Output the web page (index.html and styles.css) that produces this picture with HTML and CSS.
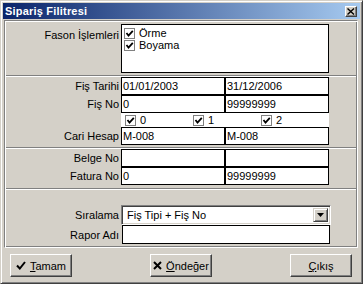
FILE: index.html
```html
<!DOCTYPE html>
<html>
<head>
<meta charset="utf-8">
<link rel="stylesheet" href="styles.css">
</head>
<body>
<div class="window">
  <div class="titlebar">
    <span class="title">Sipariş Filitresi</span>
    <span class="close"><svg width="8" height="7" viewBox="0 0 8 7"><path d="M0.5 0.5 L7 6.5 M7 0.5 L0.5 6.5" stroke="#000" stroke-width="1.4"/></svg></span>
  </div>
  <div class="panel">
    <div class="section s1">
      <div class="label top">Fason İşlemleri</div>
      <div class="listbox">
        <div class="chk"><span class="cb"><svg width="9" height="9" viewBox="0 0 9 9"><path d="M1.5 4 L3.5 6.5 L7.8 1.8" fill="none" stroke="#000" stroke-width="1.8"/></svg></span>Örme</div>
        <div class="chk"><span class="cb"><svg width="9" height="9" viewBox="0 0 9 9"><path d="M1.5 4 L3.5 6.5 L7.8 1.8" fill="none" stroke="#000" stroke-width="1.8"/></svg></span>Boyama</div>
      </div>
    </div>
    <div class="sep"></div>
    <div class="section s2">
      <div class="label">Fiş Tarihi</div>
      <div class="field">01/01/2003</div>
      <div class="field">31/12/2006</div>
      <div class="label">Fiş No</div>
      <div class="field">0</div>
      <div class="field">99999999</div>
      <div class="label"></div>
      <div class="chkrow">
        <div class="chk"><span class="cb"><svg width="9" height="9" viewBox="0 0 9 9"><path d="M1.5 4 L3.5 6.5 L7.8 1.8" fill="none" stroke="#000" stroke-width="1.8"/></svg></span>0</div>
        <div class="chk"><span class="cb"><svg width="9" height="9" viewBox="0 0 9 9"><path d="M1.5 4 L3.5 6.5 L7.8 1.8" fill="none" stroke="#000" stroke-width="1.8"/></svg></span>1</div>
        <div class="chk"><span class="cb"><svg width="9" height="9" viewBox="0 0 9 9"><path d="M1.5 4 L3.5 6.5 L7.8 1.8" fill="none" stroke="#000" stroke-width="1.8"/></svg></span>2</div>
      </div>
      <div class="label">Cari Hesap</div>
      <div class="field">M-008</div>
      <div class="field">M-008</div>
    </div>
    <div class="sep"></div>
    <div class="section s3">
      <div class="label">Belge No</div>
      <div class="field"></div>
      <div class="field"></div>
      <div class="label">Fatura No</div>
      <div class="field">0</div>
      <div class="field">99999999</div>
    </div>
    <div class="sep"></div>
    <div class="section s4">
      <div class="label">Sıralama</div>
      <div class="combo">
        <span class="combotext">Fiş Tipi + Fiş No</span>
        <span class="dropbtn"><svg width="7" height="4" viewBox="0 0 7 4"><polygon points="0,0 7,0 3.5,4" fill="#000"/></svg></span>
      </div>
      <div class="label">Rapor Adı</div>
      <div class="field wide"></div>
    </div>
  </div>
  <div class="buttons">
    <div class="btn"><svg class="ico" width="10" height="9" viewBox="0 0 10 9"><path d="M1 4.5 L3.8 7.5 L9 1" fill="none" stroke="#000" stroke-width="2"/></svg><span><u>T</u>amam</span></div>
    <div class="btn"><svg class="ico" width="9" height="9" viewBox="0 0 9 9"><path d="M1 1 L8 8 M8 1 L1 8" stroke="#000" stroke-width="2"/></svg><span><u>Ö</u>ndeğer</span></div>
    <div class="btn"><span><u>Ç</u>ıkış</span></div>
  </div>
</div>
</body>
</html>
```

FILE: styles.css
```css
* { box-sizing: border-box; }
body {
  margin: 0;
  font-family: "Liberation Sans", Arial, sans-serif;
  font-size: 11px;
  color: #000;
}
.window {
  width: 363px;
  height: 284px;
  background: #D4D0C8;
  border: 1px solid;
  border-color: #D4D0C8 #404040 #404040 #D4D0C8;
  box-shadow: inset 1px 1px #fff, inset -1px -1px #808080;
  padding: 2px;
  display: flex;
  flex-direction: column;
}
.titlebar {
  flex: none;
  height: 16px;
  background: linear-gradient(to right, #0A246A, #A6CAF0);
  display: flex;
  align-items: center;
  justify-content: space-between;
  padding: 0 3px 0 2px;
}
.title {
  color: #fff;
  font-weight: bold;
  font-size: 11px;
  letter-spacing: 0.2px;
}
.close {
  width: 12px;
  height: 11px;
  background: #D4D0C8;
  border: 1px solid;
  border-color: #fff #404040 #404040 #fff;
  box-shadow: inset -1px -1px #808080;
  display: flex;
  align-items: center;
  justify-content: center;
}
.panel {
  flex: none;
  height: 228px;
  margin: 1px 2px 0 1px;
  border: 1px solid;
  border-color: #808080 #fff #fff #808080;
  box-shadow: inset 1px 1px #fff, inset -1px -1px #808080;
  padding: 1px;
  display: flex;
  flex-direction: column;
}
.sep {
  height: 2px;
  border-top: 1px solid #808080;
  border-bottom: 1px solid #fff;
  flex: none;
}
.section {
  display: grid;
  grid-template-columns: 115px 104px 104px;
}
.s1 {
  grid-template-columns: 115px 208px;
  padding: 2px 0;
}
.s2 {
  grid-template-rows: 18px 18px 14px 18px;
  padding-bottom: 2px;
}
.s3 {
  grid-template-rows: 18px 18px;
  padding-bottom: 3px;
}
.s4 {
  grid-template-columns: 115px 210px;
  grid-template-rows: 20px 19px;
  padding-top: 15px;
}
.label {
  text-align: right;
  padding-right: 2px;
  display: flex;
  align-items: center;
  justify-content: flex-end;
  white-space: nowrap;
}
.label.top {
  align-items: flex-start;
  padding-top: 5px;
}
.listbox {
  height: 49px;
  background: #fff;
  border: 1px solid #000;
  padding: 2px 0 0 2px;
}
.field {
  background: #fff;
  border: 1px solid #000;
  padding-left: 1px;
  display: flex;
  align-items: center;
  white-space: nowrap;
}
.field.wide {
  grid-column: 2;
  width: 208px;
  margin-left: 1px;
}
.chk {
  display: flex;
  align-items: center;
  height: 12px;
  line-height: 12px;
}
.cb {
  width: 11px;
  height: 11px;
  border: 1px solid #808080;
  background: #fff;
  margin-right: 4px;
  display: flex;
  align-items: center;
  justify-content: center;
}
.chkrow {
  grid-column: 2 / span 2;
  background: #fff;
  display: grid;
  grid-template-columns: 1fr 1fr 1fr;
  padding-left: 4px;
  align-items: center;
}
.combo {
  background: #fff;
  border: 1px solid;
  border-color: #808080 #fff #fff #808080;
  box-shadow: inset 1px 1px #404040, inset -1px -1px #D4D0C8;
  display: flex;
  align-items: center;
  justify-content: space-between;
  padding: 2px;
}
.combotext {
  padding-left: 3px;
}
.dropbtn {
  width: 15px;
  height: 14px;
  background: #D4D0C8;
  border: 1px solid;
  border-color: #D4D0C8 #404040 #404040 #D4D0C8;
  box-shadow: inset 1px 1px #fff, inset -1px -1px #808080;
  display: flex;
  align-items: center;
  justify-content: center;
}
.buttons {
  flex: none;
  height: 23px;
  margin-top: 6px;
  padding: 0 8px 0 7px;
  display: flex;
  justify-content: space-between;
}
.btn {
  width: 62px;
  height: 23px;
  border: 1px solid;
  border-color: #fff #404040 #404040 #fff;
  box-shadow: inset -1px -1px #808080;
  display: flex;
  align-items: center;
  justify-content: center;
  gap: 4px;
}
.btn u {
  text-decoration: underline;
  text-underline-offset: 1px;
}
```
